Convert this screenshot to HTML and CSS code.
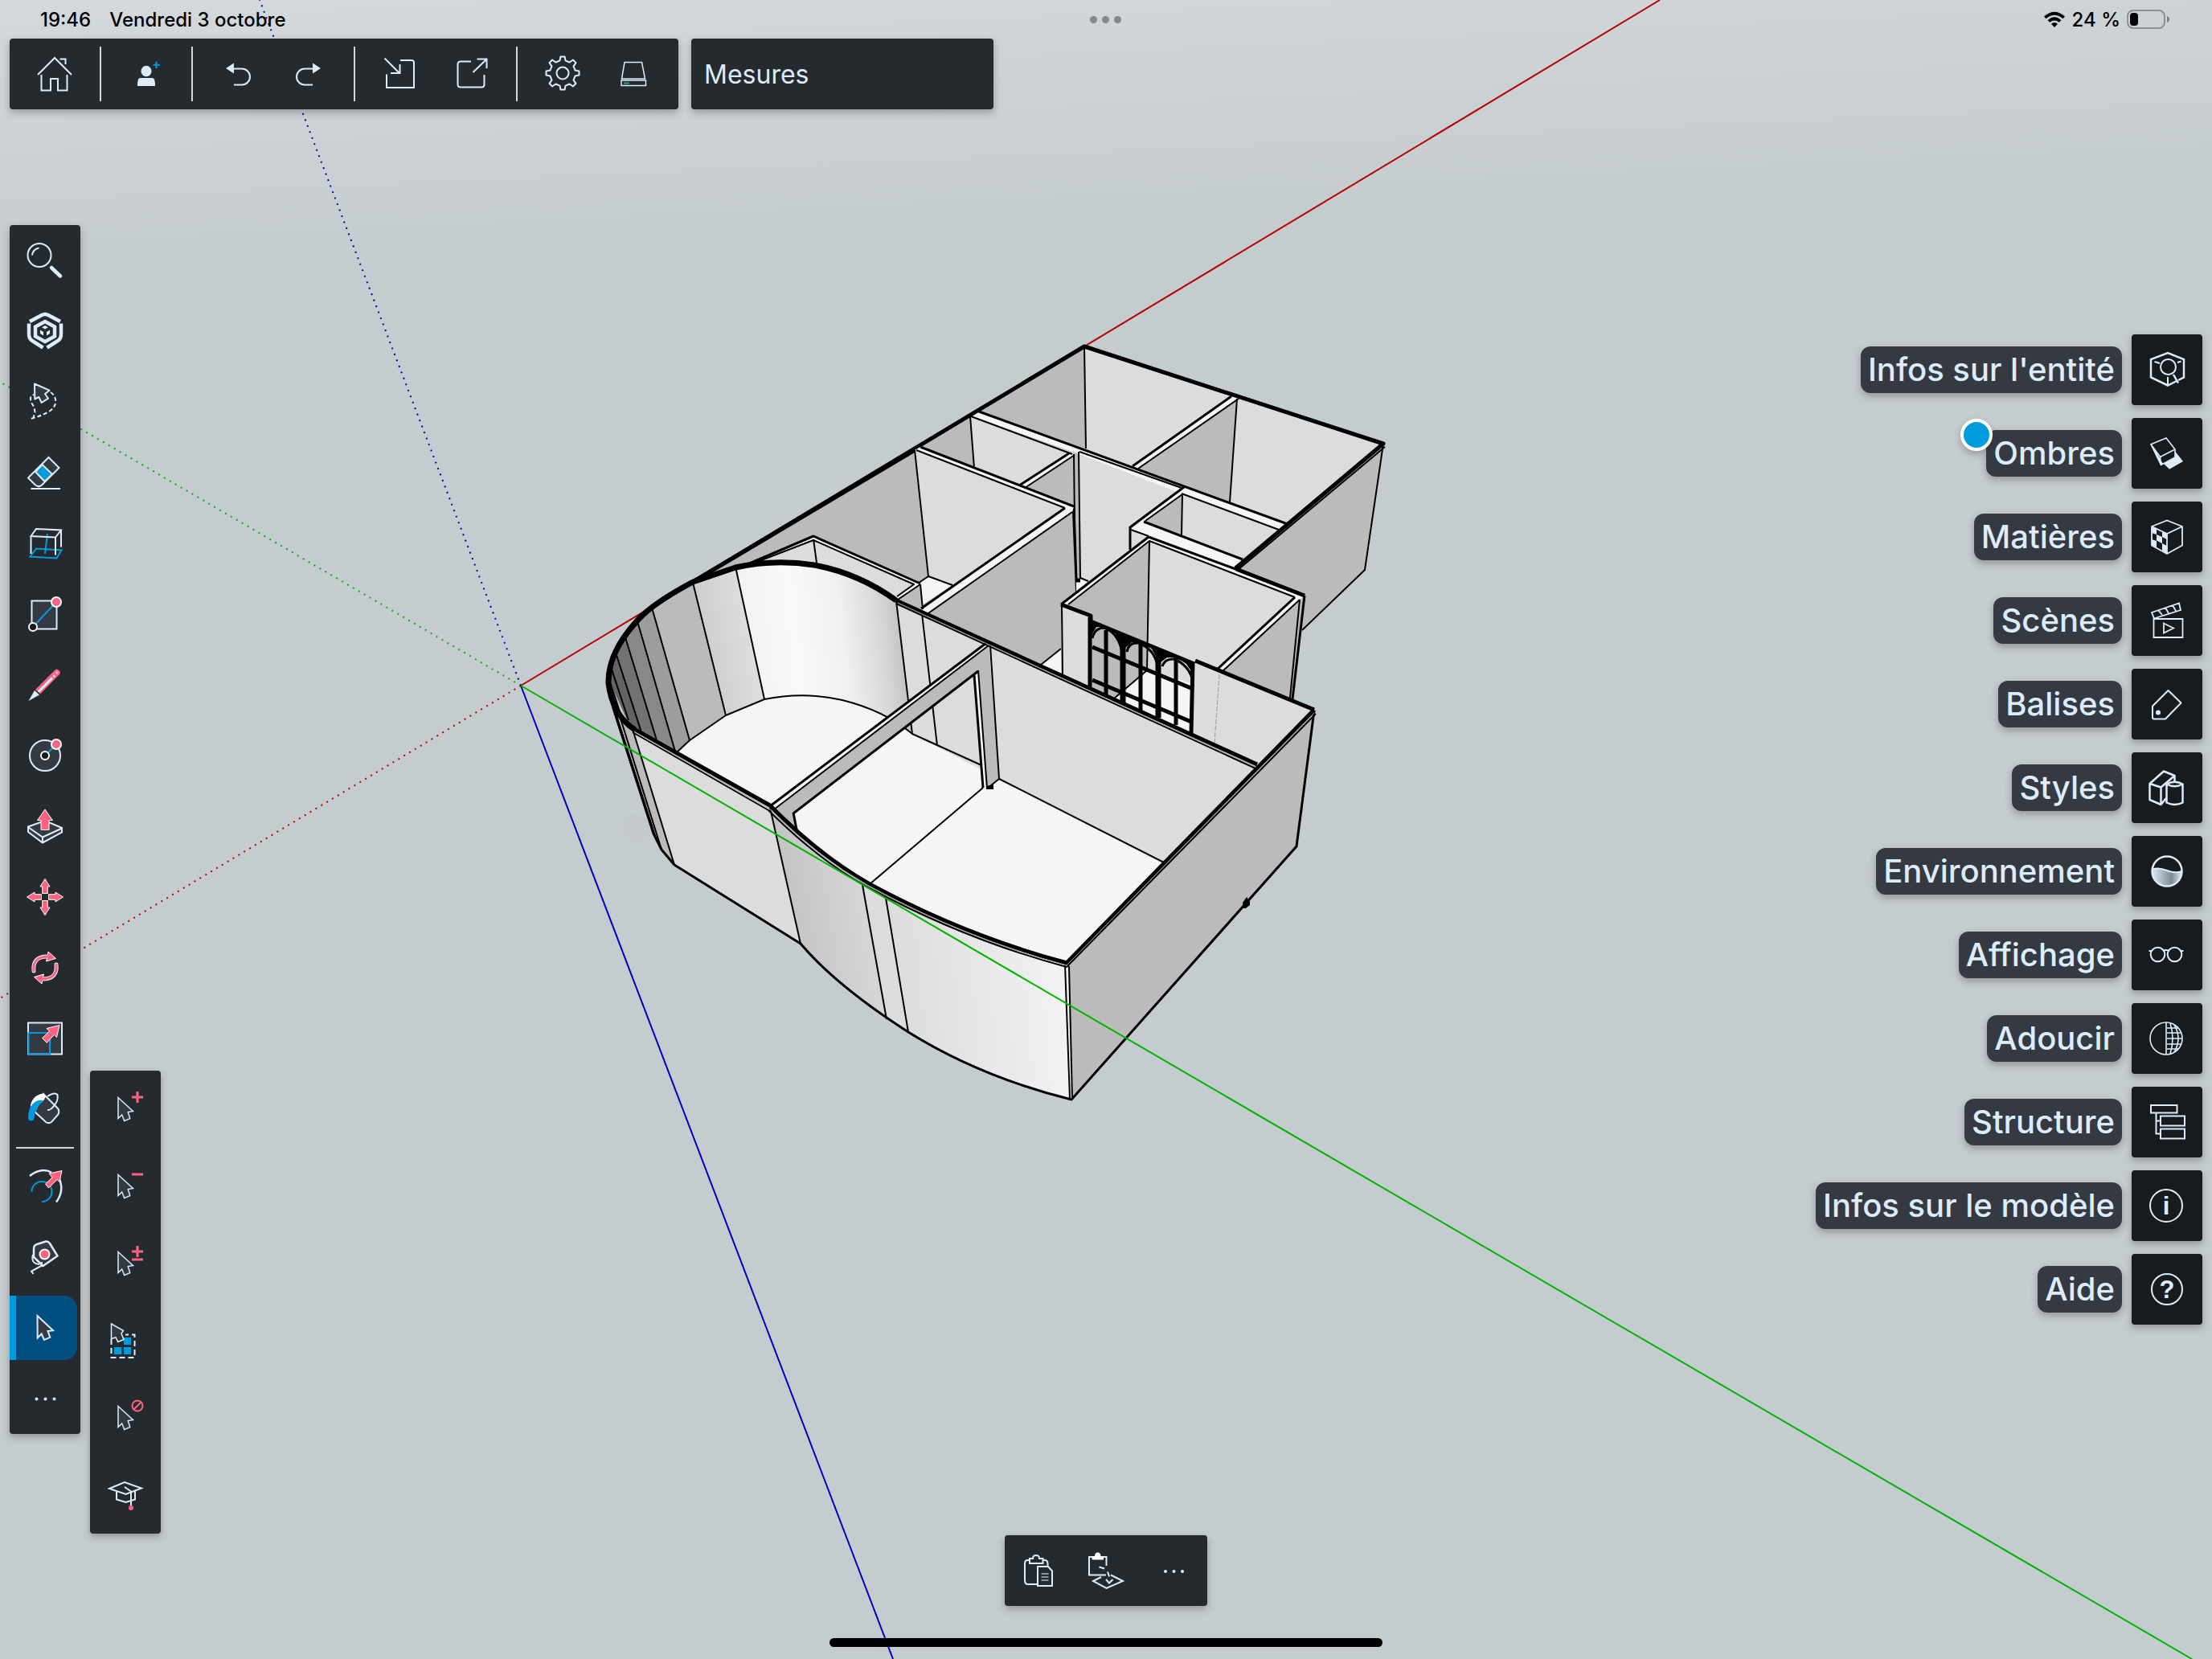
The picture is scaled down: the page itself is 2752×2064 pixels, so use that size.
FILE: index.html
```html
<!DOCTYPE html>
<html lang="fr">
<head>
<meta charset="utf-8">
<meta name="viewport" content="width=device-width, initial-scale=1">
<title>Modèle 3D</title>
<link rel="stylesheet" href="styles.css">
</head>
<body>
<div class="app">

<svg class="scene" viewBox="0 0 2752 2064" preserveAspectRatio="xMidYMid slice" aria-hidden="true">
  <defs>
    <linearGradient id="sky" x1="0" y1="0" x2="0.06" y2="1">
      <stop offset="0" stop-color="#d4d9db"/><stop offset="0.06" stop-color="#ced3d6"/><stop offset="0.16" stop-color="#c5ccd0"/><stop offset="1" stop-color="#c5ccd0"/>
    </linearGradient>
    <linearGradient id="drum" gradientUnits="userSpaceOnUse" x1="930" y1="800" x2="1128" y2="778">
      <stop offset="0" stop-color="#f3f3f3"/><stop offset="0.3" stop-color="#f9f9f9"/><stop offset="0.6" stop-color="#f0f0f0"/><stop offset="0.85" stop-color="#d6d6d6"/><stop offset="1" stop-color="#bcbcbc"/>
    </linearGradient>
    <linearGradient id="drum2" gradientUnits="userSpaceOnUse" x1="880" y1="800" x2="935" y2="790">
      <stop offset="0" stop-color="#cfcfcf"/><stop offset="1" stop-color="#dedede"/>
    </linearGradient>
    <linearGradient id="front1" gradientUnits="userSpaceOnUse" x1="970" y1="1100" x2="1090" y2="1080">
      <stop offset="0" stop-color="#c3c3c3"/><stop offset="1" stop-color="#dadada"/>
    </linearGradient>
    <linearGradient id="front2" gradientUnits="userSpaceOnUse" x1="1110" y1="1200" x2="1330" y2="1180">
      <stop offset="0" stop-color="#dcdcdc"/><stop offset="1" stop-color="#f3f3f3"/>
    </linearGradient>
  </defs>
  <rect width="2752" height="2064" fill="url(#sky)"/>
  <circle cx="791" cy="1029" r="17" fill="#c3c9cd"/>

  <g class="axis">
    <path class="red" d="M648 853 2065 0"/>
    <path class="red dotted" d="M648 853 0 1242"/>
    <path class="green dotted" d="M648 853 0 475"/>
    <path class="blue dotted" d="M648 853 323 0"/>
    <path class="blue" d="M648 853 1111 2064"/>
  </g>

  <!-- back rooms -->
  <g>
    <path class="mid" d="M1349 431 1351 558 1218 513Z"/>
    <path class="lit" d="M1349 431 1537 492 1411 582 1351 558Z"/>
    <path class="mid" d="M1539 496 1530 625 1416 583Z"/>
    <path class="lit" d="M1539 493 1721 552 1600 652 1530 625Z"/>
    <path class="mid" d="M1721 552 1698 709 1620 784 1600 760 1537 707Z"/>
    <path class="top" d="M1532 493 1541 495 1416 584 1407 580Z"/>
    <path class="mid" d="M1207 518 1212 582 1145 556Z"/>
    <path class="lit" d="M1208 518 1334 565 1270 604 1212 582Z"/>
    <path class="mid" d="M1336 565V627L1275 606Z"/>
    <path class="mid" d="M1336 565 1343 562 1345 722 1338 736Z"/>
    <path class="lit" d="M1343 562 1470 607 1405 659V684L1354 723 1344 720Z"/>
    <path class="top" d="M1338 722 1344 719 1354 723 1338 736Z"/>
    <path class="mid" d="M1471 614 1470 666 1425 649Z"/>
    <path class="lit" d="M1471 614 1591 659 1546 696 1470 666Z"/>
    <path class="lit" d="M1405 659 1427 667 1405 684Z"/>
    <path class="top" d="M1207 517 1218 512 1602 652 1591 660 1470 614 1343 565Z"/>
    <path class="top" d="M1330 564 1337 565 1275 607 1268 604Z"/>
    <path class="top" d="M1473 606 1471 614 1423 649 1546 696 1537 707 1429 670 1406 659Z"/>
    <path class="ink w4" d="M1218 512 1602 652M1532 493 1409 580M1330 564 1268 604M1473 606 1406 656V684M1423 649 1546 696"/>
    <path class="ink w3" d="M1541 496 1416 583M1208 518 1334 565M1343 562 1470 607M1470 614 1591 659M1337 566 1275 607M1471 615 1425 648M1407 659 1429 667"/>
    <path class="ink w2" d="M1349 431 1351 558M1539 496 1530 625M1207 518 1212 582M1336 565 1338 736M1342 562 1344 720M1471 614 1470 666M1344 719 1354 723"/>
    <path class="ink w5" d="M1335 630 1338 722H1344"/>
    <path class="ink w5" d="M862 724 1349 431 1721 552 1537 707"/>
    <path class="ink w3" d="M1721 552 1698 709 1620 784M1723 556 1540 709"/>
  </g>

  <!-- left rooms -->
  <g>
    <path class="mid" d="M870 719 1138 560 1155 717 1145 726 1012 667 935 700Z"/>
    <path class="lit" d="M1138 560 1325 632 1185 728 1155 717Z"/>
    <path class="top" d="M1155 717 1185 728 1148 752 1145 725Z"/>
    <path class="mid" d="M1334 636 1338 736 1320 752V807L1295 827 1150 765Z"/>
    <path class="top" d="M1295 827 1320 807V840Z"/>
    <path class="top" d="M1145 556 1336 630 1334 637 1150 766 1145 760 1325 632 1138 560Z"/>
    <path class="lit" d="M930 702 1012 667 1143 727 1117 743 1060 712 1000 700Z"/>
    <path class="top" d="M930 702 1012 667 1146 726 1117 746 1114 742 1137 727 1012 672 942 699Z"/>
    <path class="mid" d="M1145 727 1148 760 1117 745Z"/>
    <path class="ink w4" d="M1145 556 1336 630M1325 632 1146 757M930 702 1012 667 1145 726"/>
    <path class="ink w3" d="M1140 560 1325 632M1334 637 1152 765M942 699 1012 672 1137 727 1116 742M1145 727 1117 746M1145 727 1148 758"/>
    <path class="ink w2" d="M1138 560 1155 717M1012 671 1016 700M1143 725 1155 717 1185 728M1320 807 1295 827"/>
    <path class="ink w5" d="M862 724 1138 560"/>
  </g>

  <!-- small glazed room -->
  <g>
    <path class="mid" d="M1430 673 1427 834 1386 870 1354 857 1329 752Z"/>
    <path class="lit" d="M1430 673 1611 743 1514 833 1482 862 1427 834Z"/>
    <path class="top" d="M1427 834 1482 850V912L1386 869Z"/>
    <path class="ink w2" d="M1430 673 1427 834M1427 834 1386 869"/>
    <path class="mid" d="M1623 741 1608 870 1520 836 1616 746Z"/>
    <path class="top" d="M1320 752 1429 668 1623 741 1520 836 1514 833 1611 743 1430 673 1329 752Z"/>
    <path class="lit" d="M1320 752 1357 764 1354 857 1321 839Z"/>
    <path class="lit" d="M1486 823 1635 883 1564 952 1482 912Z"/>
    <path class="ink w4" d="M1320 752 1429 668M1611 743 1514 833"/>
    <path class="ink w3" d="M1329 752 1430 673 1611 743M1617 746 1520 836M1617 746 1605 868M1321 752 1322 839"/>
    <path class="ink w4" d="M1429 668 1540 709M1623 741 1608 870"/>
    <path class="ink w5" d="M1538 708 1623 741M1320 752 1357 766V772M1487 822 1635 883"/>
    <path class="dashed" d="M1517 839 1511 925"/>
    <path class="ink w5" d="M1357 773 1486 826M1359 805 1484 857M1359 846 1482 898"/>
    <path class="ink w5" d="M1356 768V857M1376 784V868M1419 800V884M1463 818V902M1484 824 1482 912"/>
    <path class="ink w8" d="M1397 790V875M1441 808V893"/>
    <path class="ink w4" d="M1359 794Q1362 781 1374 781 1392 788 1396 812M1402 811Q1404 799 1416 800 1436 807 1440 828M1446 829Q1449 819 1461 820 1480 828 1484 848"/>
    <path d="M1357 772V792L1364 780 1374 780 1386 786 1397 804V788ZM1400 792V806L1408 799 1420 799 1432 806 1440 820V806ZM1444 808V824L1452 818 1464 818 1476 826 1484 838V824Z"/>
  </g>

  <!-- drum room and main floor -->
  <g>
    <path class="floor" d="M811 756 1115 747 1232 803 1448 1073 1327 1198 1200 1157 1082 1100 992 1037 958 1003 790 907 760 850Z"/>
    <path fill="url(#drum)" d="M915 705Q963 695 1013 702 1070 712 1115 748L1135 913Q1103 888 1060 874 1000 860 951 870Z"/>
    <path fill="url(#drum2)" d="M862 725 915 705 951 870 903 890Z"/>
    <path fill="#bbb" d="M811 756 862 725 903 890 858 921Z"/>
    <path fill="#9d9d9d" d="M793 773 811 756 858 921 843 935 840 935Z"/>
    <path fill="#888" d="M778 793 793 773 841 935 817 921Z"/>
    <path fill="#727272" d="M766 812 778 793 817 921 798 911Z"/>
    <path fill="#646464" d="M757 845 759 830 766 812 798 911 782 900Z"/>
    <path class="lit" d="M1115 748 1232 803 1243 969 1135 913Z"/>
    <path class="lit" d="M1232 803 1564 952 1448 1073 1243 969Z"/>
    <path class="ink w2" d="M915 705 951 870M862 725 903 890M811 756 858 921M793 773 840 935M778 793 817 921M766 812 798 911M760 830 782 896M758 846 772 888M1115 748 1135 913M1147 763 1166 928M842 936 858 921 903 890 951 870Q1000 860 1048 871 1100 884 1135 913L1243 962M1243 969 1448 1073M1223 980 1082 1100"/>
    <path class="mid" fill-rule="evenodd" d="M958 1003 1230 800 1243 969 1228 981 1223 980 1212 840 987 1012 992 1037Z"/>
    <path class="top" d="M958 1003 1227 799 1231 803 963 1008ZM1212 840 1217 836 1228 981 1223 980Z"/>
    <path class="ink w4" d="M958 1003 1227 800M987 1012 1217 835M987 1011 992 1037M1212 840 1223 980"/>
    <path class="ink w2" d="M963 1007 1230 803M1217 834 1228 981 1243 969 1232 803"/>
    <path d="M1227 978 1236 976V982L1227 982Z"/>
  </g>

  <!-- outer walls -->
  <g>
    <path class="mid" d="M756 848 765 885 787 907 839 1076 823 1057 813 1037Z"/>
    <path class="lit" d="M787 907 958 1005 996 1174 839 1076Z"/>
    <path fill="url(#front1)" d="M958 1005Q1010 1061 1073 1098L1103 1268Q1040 1226 996 1174Z"/>
    <path class="lit" d="M1073 1098 1102 1112 1130 1284 1103 1268Z"/>
    <path fill="url(#front2)" d="M1102 1112Q1210 1170 1328 1201L1333 1368Q1220 1340 1130 1284Z"/>
    <path class="mid" d="M1329 1200 1636 885 1613 1053 1334 1368Z"/>
    <path class="top" d="M1325 1200H1329L1334 1368H1330Z"/>
    <path class="ink w4" d="M839 1076 996 1174Q1040 1226 1130 1284 1220 1340 1333 1368L1613 1053 1635 884M762 878 813 1037 823 1057 839 1076"/>
    <path class="ink w3" d="M787 907 839 1076M772 894 823 1057M765 884 816 1043M958 1005 996 1174M1073 1101 1103 1268M1102 1117 1130 1284M1325 1200 1331 1367M1330 1202 1334 1367"/>
    <path class="ink w8" d="M862 724Q810 752 793 772 756 812 757 850 762 890 790 908"/>
    <path class="ink w8" d="M862 724 915 706Q963 695 1013 703 1068 713 1115 747"/>
    <path class="ink w5" d="M787 906 958 1002Q1020 1065 1082 1100 1200 1164 1327 1198L1635 883M1115 747 1564 951"/>
    <path class="ink w2" d="M787 911 956 1008Q1018 1070 1080 1104 1200 1169 1327 1203L1637 888M1115 751 1562 956"/>
    <path class="top-line" d="M789 910 957 1006Q1018 1067 1081 1102 1200 1167 1327 1201L1635 887M1117 750 1562 954"/>
    <path d="M1546 1123 1551 1116 1555 1122V1126L1550 1130H1547Z"/>
  </g>

  <g class="axis"><path class="green" d="M648 853 2727 2064"/></g>
</svg>

<header class="status">
  <div class="status-left"><time>19:46</time><span>Vendredi 3 octobre</span></div>
  <div class="multitask"><i></i><i></i><i></i></div>
  <div class="status-right">
    <svg class="wifi" viewBox="0 0 28 20"><path d="M1 6.500Q14-5 27 6.500L24.500 9.300Q14 0 3.500 9.300ZM5.500 11.200Q14 3.500 22.500 11.200L19.800 13.800Q14 9 8.200 13.800ZM10 15.700Q14 12.400 18 15.700L14 20Z"/></svg>
    <span>24 %</span>
    <svg class="battery" viewBox="0 0 54 24"><rect x="1" y="1" width="46" height="22" rx="7" fill="none" stroke="#8d9092" stroke-width="2"/><rect x="4" y="4" width="10" height="16" rx="4"/><path d="M50 8Q53 9 53 12T50 16Z" fill="#7d8082"/></svg>
  </div>
</header>

<nav class="topbar" aria-label="Barre principale">
  <div class="panel row">
    <div class="group">
      <button class="tool" aria-label="Accueil"><svg viewBox="0 0 88 88"><path d="M23 45 44 24 65 45M27.500 45V64.500H39V50H48V64.500H59.500V45M50.500 25.500H57.500V32"/></svg></button>
    </div>
    <div class="group">
      <button class="tool" aria-label="Inviter"><svg viewBox="0 0 88 88"><g class="solid"><ellipse cx="44" cy="40.500" rx="6.500" ry="6.800"/><path d="M36 49H52Q55 49 55 59H33Q33 49 36 49Z"/></g><path class="blue" d="M56.500 28.500V37M52.500 32.700H61"/></svg></button>
    </div>
    <div class="group">
      <button class="tool" aria-label="Annuler"><svg viewBox="0 0 88 88"><path class="solid" d="M29 37 39 30.500V43.500Z"/><path d="M39 37.500H49A10 10 0 0 1 49 57.500H39"/></svg></button>
      <button class="tool" aria-label="Rétablir"><svg viewBox="0 0 88 88"><path class="solid" d="M59 37 49 30.500V43.500Z"/><path d="M49 37.500H39A10 10 0 0 0 39 57.500H49"/></svg></button>
    </div>
    <div class="group">
      <button class="tool" aria-label="Importer"><svg viewBox="0 0 88 88"><path d="M44 27H58Q61 27 61 30V61H27V44.500M24.500 24.500 43 43M43.500 32V43H32"/></svg></button>
      <button class="tool" aria-label="Exporter"><svg viewBox="0 0 88 88"><path d="M44 28.500H31Q27.500 28.500 27.500 32V57Q27.500 60.500 31 60.500H57Q60.500 60.500 60.500 57V45M46.500 42 63 26M51.500 25.500H63.500V37"/></svg></button>
    </div>
    <div class="group">
      <button class="tool" aria-label="Réglages"><svg viewBox="0 0 88 88"><g transform="translate(44 43)"><circle r="7.500"/><path stroke-linejoin="round" d="M-2.600-20.500H2.600L3.500-15.600 8.600-13.500 12.900-16.500 16.500-12.900 13.500-8.600 15.600-3.500 20.500-2.600V2.600L15.600 3.500 13.500 8.600 16.500 12.900 12.900 16.500 8.600 13.500 3.500 15.600 2.600 20.500H-2.600L-3.500 15.600-8.600 13.500-12.900 16.500-16.500 12.900-13.500 8.600-15.600 3.500-20.500 2.600V-2.600L-15.600-3.500-13.500-8.600-16.500-12.900-12.900-16.500-8.600-13.500-3.500-15.600Z"/></g></svg></button>
      <button class="tool" aria-label="Stockage"><svg viewBox="0 0 88 88"><path d="M33 29.500H54.500L58.500 50H29.500ZM29 52H59.500V58.500H29Z" stroke-width="1.500"/><path d="M32 55.500H39" stroke="#3f9380"/></svg></button>
    </div>
  </div>
  <div class="panel measure"><label for="measure">Mesures</label><input id="measure" type="text"></div>
</nav>

<main class="workspace">
  <div class="left">
    <div class="panel column" role="toolbar" aria-label="Outils">
      <button class="tool" aria-label="Rechercher"><svg viewBox="0 0 88 88"><circle cx="37" cy="37.500" r="14.500"/><path d="M28 37.500Q29 30 36.500 28.500"/><path stroke-width="4.500" stroke-linecap="round" d="M52 53 63 63.500"/></svg></button>
      <button class="tool" aria-label="3D Warehouse"><svg viewBox="0 0 88 88"><g stroke-width="4.500"><path d="M25 32 40 24Q44 22 48 24L63 32M24 34.500V48Q24 53 28 56L41.500 64.500M64 34.500V48Q64 53 60 56L46.500 64.500M44 32 56 38.500V50.500L44 57 32 50.500V38.500Z"/></g><path class="solid" d="M44 37 48 39.300 44 41.500 40 39.300ZM38 42.600 42 45V49.600L38 47ZM50 42.600 46 45V49.600L50 47Z"/></svg></button>
      <button class="tool" aria-label="Lasso"><svg viewBox="0 0 88 88"><path class="shade" stroke-linejoin="round" d="M31 21.500 49.500 29.700 44 34 48 39.700 39.700 45 36.300 38 31.300 40.500Z"/><path stroke-dasharray="5 3" d="M51 32Q57 36 57.300 43.500 57 50 51 54.500 42 61 24 65.500M29 65 31.500 57Q31 50 27 45 24 37 30 35"/></svg></button>
      <button class="tool" aria-label="Gomme"><svg viewBox="0 0 88 88"><path class="shade" d="M48.500 25 61.500 38 40 59.500Q36 63 31.500 59L23 50.500Z"/><path fill="#009bdd" d="M40.500 34 53 46 43.500 55 32 43Z"/><path d="M26.500 64H63"/></svg></button>
      <button class="tool" aria-label="Plan de section"><svg viewBox="0 0 88 88"><path class="blue" d="M25.500 60.500 33 50.500 64.500 52.500 58.500 62.500ZM47 32 44 57"/><path d="M33 26 64 27.500 57 36.500 26.500 35ZM26.500 35V57M64 27.500V48.500M57 36.500V58.500"/></svg></button>
      <button class="tool" aria-label="Rectangle"><svg viewBox="0 0 88 88"><rect class="shade" x="27.500" y="27.500" width="31" height="35"/><path class="blue" d="M29 60 58 29"/><circle class="dot" cx="58" cy="29" r="6"/><circle class="hole" cx="29" cy="60" r="5"/></svg></button>
      <button class="tool" aria-label="Crayon"><svg viewBox="0 0 88 88"><path fill="#ff6380" stroke="none" d="M32 50 57 25Q60 23 63 28 63 30 62 31L38 55.500Z"/><path stroke-width="3" d="M36 52.500 53 35.500M54.500 34 56 32.500M58 29.500 59.500 28.500"/><path class="solid" d="M23.500 64 31 51 37 56.500Z"/></svg></button>
      <button class="tool" aria-label="Cercle"><svg viewBox="0 0 88 88"><circle class="shade" cx="44" cy="44" r="19"/><path class="blue" d="M44 44 58 30"/><circle class="dot" cx="58" cy="30" r="6"/><circle class="hole" cx="44" cy="44" r="5"/></svg></button>
      <button class="tool" aria-label="Pousser/Tirer"><svg viewBox="0 0 88 88"><path class="shade" d="M23 44.500 44 37 65 46V51.500L41 64.500 23 51Z"/><path d="M23 45 41 57.500 65 46.500M41 57.500V64"/><path class="arrow" d="M44 23 53.500 36.500H49V48.500H39V36.500H34.500Z"/></svg></button>
      <button class="tool" aria-label="Déplacer"><svg viewBox="0 0 88 88"><path class="arrow" d="M44 21.500 50 31H47.300V39.500H40.700V31H38ZM44 66.500 50 57H47.300V48.500H40.700V57H38ZM21.500 44 31 38V40.700H39.500V47.300H31V50ZM66.500 44 57 38V40.700H48.500V47.300H57V50Z"/></svg></button>
      <button class="tool" aria-label="Faire pivoter"><svg viewBox="0 0 88 88"><path stroke-width="5" stroke-linecap="round" d="M30 48Q28 30 47 30M58 40Q60 58 41 58"/><path class="arrow" d="M48 24 57.500 32.500 45.500 36 47 30ZM40 64 30.500 55.500 42.500 52 41 58Z"/><path stroke="#ff6380" stroke-width="3" stroke-linecap="round" d="M30 48Q28 30 48 30M58 40Q60 58 40 58"/></svg></button>
      <button class="tool" aria-label="Échelle"><svg viewBox="0 0 88 88"><rect class="shade" x="23" y="24.500" width="42" height="39"/><path class="blue" d="M23.500 37H50V63.500H23.500Z"/><path class="arrow" d="M62 27.500 58.500 42.500 55.300 39.500 46.300 49.300 40.500 43.500 49.500 35 46 31.500Z"/></svg></button>
      <button class="tool" aria-label="Colorier"><svg viewBox="0 0 88 88"><path class="shade" d="M42 25 59 42Q63 46 60 51L52 60Q47 63 43 58L31 47Z"/><path d="M47 28Q56 22 59.500 26 61 34 54 41 51 45 47 45"/><path fill="#fff" stroke="#fff" d="M27 39Q30 27 42 25.500 46 28 40 34 33 40 27 41Z"/><path fill="#009bdd" stroke="none" d="M26 41Q32 31 42 33 31 43 30 57 24 61 23 55 23 47 26 41Z"/></svg></button>
      <hr>
      <button class="tool" aria-label="Décalage"><svg viewBox="0 0 88 88"><path stroke-width="2.500" d="M25 31Q39 20 52 26.500M62 35Q68 50 58 63.500"/><path class="blue" d="M27.500 50.500A12.500 12.500 0 1 1 40 63"/><path class="arrow" d="M65 24.500 62 38.500 59 35.500 48.500 46 44.500 41 53 33 49 28Z"/></svg></button>
      <button class="tool" aria-label="Mètre"><svg viewBox="0 0 88 88"><path class="shade" stroke-linejoin="round" stroke-width="2.500" d="M30 34Q30 29 34 28L45 24.500Q48 24 50 27L59.500 42.500 41.500 55 30 44Z"/><path d="M29 41Q26 52 37 53M41 54 27 61.500 29.500 65M40 50V56"/><circle class="dot" cx="43.500" cy="40.500" r="6"/></svg></button>
      <button class="tool selected" aria-label="Sélectionner" aria-pressed="true"><svg viewBox="0 0 88 88"><path class="shade" d="M34.500 29 54 47.200 47.500 48 50.300 55.800 43 59 39.700 51.500 34.700 56.500Z"/></svg></button>
      <button class="tool" aria-label="Plus d'outils"><svg viewBox="0 0 88 88"><g class="solid"><circle cx="33.500" cy="44.500" r="2"/><circle cx="44.500" cy="44.500" r="2"/><circle cx="55.500" cy="44.500" r="2"/></g></svg></button>
    </div>
    <div class="panel column flyout" role="toolbar" aria-label="Modes de sélection">
      <button class="tool" aria-label="Ajouter"><svg viewBox="0 0 88 96"><path class="shade thin" d="M35 33.500 53.500 50.500 47.300 51.500 49.700 59.600 42.700 62.500 39.700 55 35 59.500Z"/><path class="pink" d="M59 26V40M52 33H66"/></svg></button>
      <button class="tool" aria-label="Soustraire"><svg viewBox="0 0 88 96"><path class="shade thin" d="M35 33.500 53.500 50.500 47.300 51.500 49.700 59.600 42.700 62.500 39.700 55 35 59.500Z"/><path class="pink" d="M52 33H66"/></svg></button>
      <button class="tool" aria-label="Inverser"><svg viewBox="0 0 88 96"><path class="shade thin" d="M35 33.500 53.500 50.500 47.300 51.500 49.700 59.600 42.700 62.500 39.700 55 35 59.500Z"/><path class="pink" d="M59 26V40M52 33H66M52 43H66"/></svg></button>
      <button class="tool" aria-label="Tout sélectionner"><svg viewBox="0 0 88 96"><path d="M26.500 46V69H55.500V40.500H44" stroke-dasharray="7 4"/><path fill="#009bdd" stroke="none" d="M42 44H51V53H42ZM30 56H39V65H30ZM42 56H51V65H42Z"/><path class="shade thin" d="M26.500 27 41.500 35.500 39 39 42 46.500 34.700 49.500 32 44 26.500 45.500Z"/></svg></button>
      <button class="tool" aria-label="Tout désélectionner"><svg viewBox="0 0 88 96"><path class="shade thin" d="M35 33.500 53.500 50.500 47.300 51.500 49.700 59.600 42.700 62.500 39.700 55 35 59.500Z"/><g class="pink round"><circle cx="59" cy="33" r="6.500"/><path d="M54.500 37.500 63.500 28.500"/></g></svg></button>
      <button class="tool" aria-label="Apprentissage"><svg viewBox="0 0 88 96"><path d="M24 40 43 32 64 39.500 44.500 47ZM33 44V53.500L44.500 57 56 53.500V43M43 38 51 43.500V61"/><circle cx="51" cy="64" r="3" fill="#ff6380" stroke="none"/></svg></button>
    </div>
  </div>

  <ul class="panels">
    <li><span class="tag" id="p1">Infos sur l'entité</span><button class="tool" aria-labelledby="p1"><svg viewBox="0 0 88 88"><path stroke-width="2.500" d="M56 58 45 63.500 24 53.500V31L45 23 65 31V53.500L58 57"/><path d="M28.500 34 35 36M57 35 61.500 33.500M45 53V63"/><path stroke-width="2.500" d="M52 50 58 60.500"/><circle cx="45.500" cy="40.500" r="9.500"/></svg></button></li>
    <li><span class="tag" id="p2">Ombres<i class="marker"></i></span><button class="tool" aria-labelledby="p2"><svg viewBox="0 0 88 88"><path class="solid" d="M54.500 42 64 54 47 63.700 40 57 53.700 49.500Z"/><path fill="#171b1e" stroke-width="1.600" d="M24 32.700 43 25 54 39V49L36.500 58.500ZM24 32.700 35.500 48.500 54 39M35.500 48.500 36.500 58M24 33 38 57"/></svg></button></li>
    <li><span class="tag" id="p3">Matières</span><button class="tool" aria-labelledby="p3"><svg viewBox="0 0 88 88"><path class="solid" d="M25 31 31 33.500V41L25 39ZM31 41 38 44V52L31 48.500ZM38 37 44 40V47L38 44ZM25 47 31 49V57L25 54ZM38 52 44 55V65L38 61Z"/><path d="M25 31 44 23.500 63 31V54.500L44 65 25 54.500ZM25 31 44 40 63 31M44 40V65" stroke-width="1.800"/></svg></button></li>
    <li><span class="tag" id="p4">Scènes</span><button class="tool" aria-labelledby="p4"><svg viewBox="0 0 88 88"><path stroke-width="1.800" d="M27.500 42H63.500V65H27.500ZM25 34 59 22.500 61 31 28 41.500ZM33 31 38 37M42 28 46 35M51 25 55 32M40 47.500 52 53.500 40 59.500Z"/></svg></button></li>
    <li><span class="tag" id="p5">Balises</span><button class="tool" aria-labelledby="p5"><svg viewBox="0 0 88 88"><path stroke-linejoin="round" d="M45.500 27 61.500 42.500 42 62.500H28Q26 62.500 26 60.500V46.500Z"/><circle class="solid" cx="33" cy="54.500" r="3"/></svg></button></li>
    <li><span class="tag" id="p6">Styles</span><button class="tool" aria-labelledby="p6"><svg viewBox="0 0 88 88"><g stroke-width="2.500"><path stroke-linejoin="round" d="M22.500 39 40 23.500 53.500 29 36.500 43.500ZM22.500 39V59L36.500 65 43 57M36.500 43.500V65M53.500 29V36"/><path fill="#171b1e" d="M43.500 39.500V62.500Q53.500 67.500 63.500 62.500V39.500Q53.500 34 43.500 39.500 53.500 45 63.500 39.500"/></g></svg></button></li>
    <li><span class="tag" id="p7">Environnement</span><button class="tool" aria-labelledby="p7"><svg viewBox="0 0 88 88"><defs><linearGradient id="sea" x1="0" y1="0" x2="1" y2="0"><stop offset="0" stop-color="#dcecfb"/><stop offset=".65" stop-color="#7f8a94"/><stop offset="1" stop-color="#dcecfb"/></linearGradient></defs><path fill="url(#sea)" stroke="none" d="M25 42Q34 39 44 43T63 44Q61 62 44 63 27 62 25 42Z"/><circle cx="44" cy="44" r="18.500" stroke-width="2.500"/><path d="M26 41.500Q34 39 44 43T62 44"/></svg></button></li>
    <li><span class="tag" id="p8">Affichage</span><button class="tool" aria-labelledby="p8"><svg viewBox="0 0 88 88"><circle cx="32.500" cy="43.500" r="8.800"/><circle cx="53.500" cy="43.500" r="8.800"/><path d="M21.500 39H25M61 39H64.500M39 39Q43 37 47 39"/></svg></button></li>
    <li><span class="tag" id="p9">Adoucir</span><button class="tool" aria-labelledby="p9"><svg viewBox="0 0 88 88"><circle cx="43" cy="44" r="20" stroke-width="1.600"/><path d="M43 24V64M44 31H58M44 37H62M44 44H63M44 51H62M44 57H58M48 25Q54 44 48 63M53 27Q63 44 53 61" stroke-width="1.600"/></svg></button></li>
    <li><span class="tag" id="p10">Structure</span><button class="tool" aria-labelledby="p10"><svg viewBox="0 0 88 88"><path d="M24 23H56.500V32.500H24ZM36 36.500H66V48.500H36ZM36 52.500H66V64.500H36ZM30.500 33V58.500H36M30.500 42.500H36"/></svg></button></li>
    <li><span class="tag" id="p11">Infos sur le modèle</span><button class="tool" aria-labelledby="p11"><svg viewBox="0 0 88 88"><circle cx="43" cy="44" r="20"/><text x="43" y="55">i</text></svg></button></li>
    <li><span class="tag" id="p12">Aide</span><button class="tool" aria-labelledby="p12"><svg viewBox="0 0 88 88"><circle cx="44" cy="44" r="19"/><text x="44" y="55">?</text></svg></button></li>
  </ul>
</main>

<footer class="bottom">
  <div class="panel row clipboard" role="toolbar" aria-label="Presse-papiers">
    <button class="tool" aria-label="Coller"><svg viewBox="0 0 84 88"><path d="M31 31H29Q25 31 25 35V56Q25 61 29 61H40M47 31H49Q53.500 31 53.500 35V38M31 35V29H35Q35 25 39 25T43 29H47.500V35ZM41 39H54L59 44.500V63H41Z"/><path d="M45.500 48H54.500M45.500 52H54.500M45.500 56H54.500" stroke="#8b939a"/></svg></button>
    <button class="tool" aria-label="Coller sur place"><svg viewBox="0 0 84 88"><path d="M25 27H21V49.500H42M39 27H42.500V38M33.500 39.500 40 41.500M44 45.500 46 51.500M42 55 46 59.500 50.500 55M36 52 26 57 42.500 66 63 57 48 49.500"/><path fill="#fff" stroke="none" d="M24.500 30.500V26H28Q28 21.500 31.700 21.500T35.500 26H39V30.500Z"/></svg></button>
    <button class="tool" aria-label="Plus"><svg viewBox="0 0 84 88"><g class="solid"><circle cx="32" cy="45" r="2"/><circle cx="42.500" cy="45" r="2"/><circle cx="53" cy="45" r="2"/></g></svg></button>
  </div>
  <div class="home-bar"></div>
</footer>

</div>
</body>
</html>
```
FILE: styles.css
```css
:root {
  --panel: #252a2e;
  --panel-deep: #171b1e;
  --tag: #353942;
  --ice: #dcecfb;
  --blue: #009bdd;
  --pink: #ff6380;
  --shadow: 0 4px 10px rgba(40, 35, 45, 0.32);
}

* { box-sizing: border-box; }

body {
  margin: 0;
  background: #c5ccd0;
  font-family: Inter, "Liberation Sans", sans-serif;
}

.app {
  position: relative;
  display: flex;
  flex-direction: column;
  min-height: 100vh;
  overflow: hidden;
}

/* 3D viewport behind the interface */
.scene {
  position: absolute;
  inset: 0;
  width: 100%;
  height: 100%;
  z-index: -1;
}
.axis path { fill: none; stroke-width: 2; }
.axis .red { stroke: #b90000; }
.axis .green { stroke: #00b400; }
.axis .blue { stroke: #0000b9; }
.axis .dotted { stroke-dasharray: 2 6; }
.lit { fill: #dcdcdc; }
.mid { fill: #bbbbbb; }
.top, .floor { fill: #f5f5f5; }
.ink { fill: none; stroke: #000; stroke-linejoin: round; }
.w2, .w3 { stroke-width: 2; }
.w4 { stroke-width: 3; }
.w5 { stroke-width: 5; }
.w8 { stroke-width: 7; }
.top-line { fill: none; stroke: #a0a0a0; stroke-width: 1; }
.dashed { fill: none; stroke: #999; stroke-dasharray: 6 2; }

/* status bar */
.status {
  display: grid;
  grid-template-columns: 1fr auto 1fr;
  align-items: center;
  height: 48px;
  padding: 0 52px 0 50px;
  font-size: 24px;
  font-weight: 500;
}
.status-left { display: flex; gap: 23px; }
.status-right {
  display: flex;
  align-items: center;
  justify-content: flex-end;
  gap: 8px;
}
.wifi { width: 28px; height: 20px; }
.battery { width: 54px; height: 24px; }
.multitask { display: flex; gap: 6px; }
.multitask i {
  width: 9px;
  height: 9px;
  border-radius: 50%;
  background: #85888a;
}

/* panels and buttons */
.panel {
  background: var(--panel);
  border-radius: 4px;
  box-shadow: var(--shadow);
}
.row { display: flex; }
.column { display: flex; flex-direction: column; }

.tool {
  display: block;
  width: 88px;
  height: 88px;
  padding: 0;
  border: 0;
  background: none;
  color: var(--ice);
}
.tool svg {
  display: block;
  width: 100%;
  height: 100%;
  fill: none;
  stroke: currentColor;
  stroke-width: 2;
}
.tool .solid { fill: currentColor; stroke: none; }
.tool .shade { fill: var(--tag); }
.tool .thin { stroke-width: 1.5; }
.tool .blue { stroke: var(--blue); }
.tool .pink { stroke: var(--pink); stroke-width: 3; }
.tool .round { stroke-width: 2; }
.tool .dot { fill: var(--pink); stroke: #fff; }
.tool .hole { fill: var(--panel-deep); stroke: #fff; }
.tool .arrow { fill: var(--pink); stroke: #fff; stroke-width: 1; }
.tool text {
  fill: currentColor;
  stroke: none;
  font-size: 31px;
  font-weight: 600;
  text-anchor: middle;
}

.topbar {
  display: flex;
  gap: 16px;
  padding: 0 12px;
}
.group {
  position: relative;
  display: flex;
  padding: 0 12px;
}
.group + .group { margin-left: 2px; }
.group + .group::before {
  content: "";
  position: absolute;
  left: -2px;
  top: 10px;
  bottom: 10px;
  width: 2px;
  background: #d4d6d8;
}

.measure {
  display: flex;
  align-items: center;
  width: 376px;
  padding: 0 16px;
  color: var(--ice);
  font-size: 32px;
}
.measure input {
  flex: 1;
  min-width: 0;
  border: 0;
  background: none;
  color: inherit;
  font: inherit;
  outline: none;
}

.workspace {
  flex: 1;
  display: flex;
  justify-content: space-between;
  align-items: flex-start;
  padding: 144px 12px 0;
}
.left {
  display: flex;
  align-items: flex-start;
  gap: 12px;
}
.column hr {
  width: 72px;
  height: 2px;
  margin: 3px auto;
  border: 0;
  background: #d4d6d8;
}
.selected {
  background: linear-gradient(90deg, var(--blue) 8px, #004f80 8px);
  width: 84px;
  height: 80px;
  margin: 4px 0;
  border-radius: 0 16px 16px 0;
}
.selected svg { width: 88px; height: 88px; margin: -4px 0; }

.flyout { margin-top: 1052px; }
.flyout .tool { height: 96px; }

.panels {
  display: flex;
  flex-direction: column;
  gap: 16px;
  margin: 136px 0 0;
  padding: 0;
  list-style: none;
}
.panels li {
  display: flex;
  align-items: center;
  justify-content: flex-end;
  gap: 12px;
}
.panels .tool {
  background: var(--panel-deep);
  border-radius: 4px;
  box-shadow: var(--shadow);
}
.tag {
  position: relative;
  padding: 0 9px;
  border-radius: 12px;
  background: var(--tag);
  box-shadow: var(--shadow);
  color: var(--ice);
  font-size: 40px;
  font-weight: 500;
  line-height: 58px;
}
.marker {
  position: absolute;
  left: -32px;
  top: -14px;
  width: 40px;
  height: 40px;
  border: 4px solid #fff;
  border-radius: 50%;
  background: var(--blue);
  box-shadow: 0 4px 8px rgba(40, 35, 45, 0.3);
}

.bottom {
  display: flex;
  flex-direction: column;
  align-items: center;
  gap: 40px;
  padding-bottom: 15px;
}
.clipboard .tool { width: 84px; }
.home-bar {
  width: 25%;
  height: 11px;
  border-radius: 6px;
  background: #000;
}
```
